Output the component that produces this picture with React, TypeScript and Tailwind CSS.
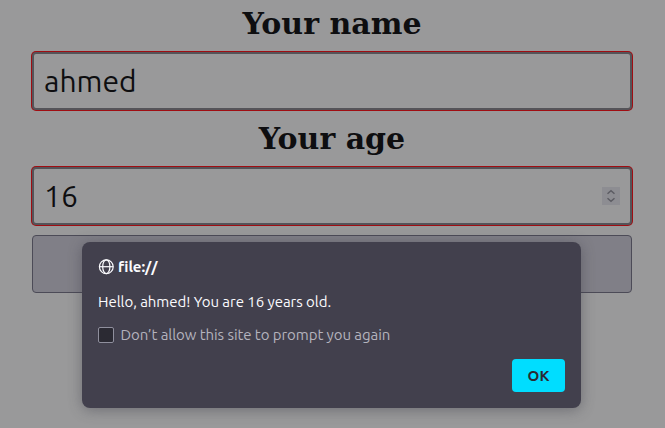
import React from "react";

const bodyFont = "font-['Ubuntu','Noto_Sans',sans-serif]";

function Heading({ children }: { children: React.ReactNode }) {
  return (
    <h1 className="flex h-[47px] items-center justify-center whitespace-nowrap pb-0.5 pr-px font-['DejaVu_Serif',serif] text-[30px] font-bold leading-none text-[#0e0e10]">
      <span>{children}</span>
    </h1>
  );
}

function Field({ children, spinner }: { children: React.ReactNode; spinner?: boolean }) {
  return (
    <div className="mx-[31px] h-[60px] w-[602px] rounded-[5px] bg-[#a00d12] p-px">
      <div className="flex h-full items-center justify-between rounded-[4px] border-2 border-[#555459] bg-[#99999a] px-[10px]">
        {children}
        {spinner && (
          <span className="flex h-[18px] w-[18px] items-center justify-center bg-[#8d8d92]">
            <svg width="18" height="18" viewBox="0 0 18 18" fill="none" stroke="#5c5c63" strokeWidth="1.5">
              <path d="M5.5 6.8 9 3.7l3.5 3.1M5.5 11.2 9 14.3l3.5-3.1" />
            </svg>
          </span>
        )}
      </div>
    </div>
  );
}

export default function App() {
  return (
    <main className={`relative h-[428px] w-[665px] overflow-hidden bg-[#99999a] ${bodyFont}`}>
      <div className="pt-px">
        <Heading>Your name</Heading>
      </div>
      <div className="mt-[3px]">
        <Field>
          <span className="text-[30px] leading-none text-[#0e0e10]">ahmed</span>
        </Field>
      </div>
      <div className="mt-[5px]">
        <Heading>Your age</Heading>
      </div>
      <div className="mt-[3px]">
        <Field spinner>
          <span className="text-[30px] leading-none text-[#0e0e10]">16</span>
        </Field>
      </div>
      <div className="mx-8 mt-[9px] h-[58px] w-[600px] rounded-[4px] border border-[#4c4b57] bg-[#807f87]" />

      <section
        role="dialog"
        className="absolute left-[82px] top-[242px] flex h-[166px] w-[499px] flex-col rounded-[8px] bg-[#42404d] px-4 pt-4 text-[15px] leading-[18px] text-[#fbfbfe] shadow-[0_2px_14px_rgba(58,57,68,0.45)]"
      >
        <div className="flex h-[18px] items-center gap-1 font-bold">
          <svg width="16" height="16" viewBox="0 0 16 16" fill="none" stroke="currentColor" strokeWidth="1.2">
            <circle cx="8.3" cy="7.7" r="6.9" />
            <ellipse cx="8.3" cy="7.7" rx="3.6" ry="6.9" />
            <path d="M1.4 7.7h13.8" />
          </svg>
          <span className="tracking-[-0.1px]">file://</span>
        </div>
        <div className="mt-[17px] h-[18px] whitespace-nowrap tracking-[-0.04px]">Hello, ahmed! You are 16 years old.</div>
        <div className="mt-[15px] flex h-[18px] items-center gap-[6.5px] text-[#b4b3bd]">
          <span className="h-4 w-4 rounded-[2px] border border-[#8f8f9d] bg-[#2b2a33]" />
          <span className="whitespace-nowrap tracking-[-0.06px]">Don’t allow this site to prompt you again</span>
        </div>
        <button className="mt-[15px] h-[33px] w-[53px] self-end rounded-[4px] bg-[#00ddff] font-bold text-[#2b2a33]">
          OK
        </button>
      </section>
    </main>
  );
}
